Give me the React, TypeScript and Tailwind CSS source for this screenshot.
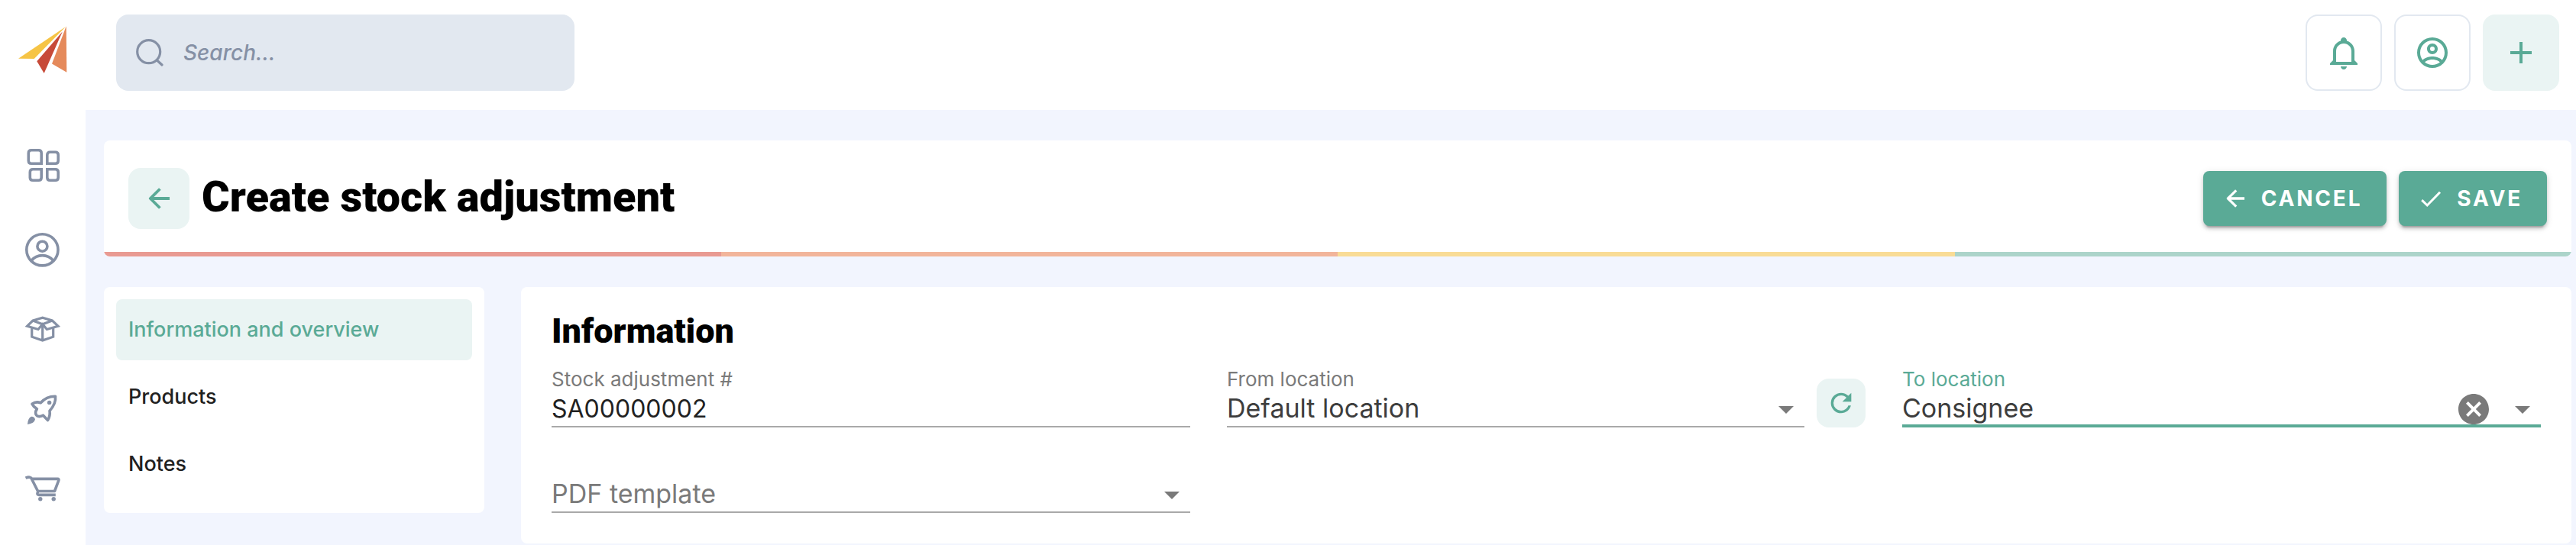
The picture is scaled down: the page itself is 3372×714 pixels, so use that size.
import type { ReactNode } from 'react';

const MDI = {
  bell: 'M10 21H14C14 22.1 13.1 23 12 23S10 22.1 10 21M21 19V20H3V19L5 17V11C5 7.9 7 5.2 10 4.3V4C10 2.9 10.9 2 12 2S14 2.9 14 4V4.3C17 5.2 19 7.9 19 11V17L21 19M17 11C17 8.2 14.8 6 12 6S7 8.2 7 11V18H17V11Z',
  account:
    'M12,2A10,10 0 0,0 2,12A10,10 0 0,0 12,22A10,10 0 0,0 22,12A10,10 0 0,0 12,2M7.07,18.28C7.5,17.38 10.12,16.5 12,16.5C13.88,16.5 16.5,17.38 16.93,18.28C15.57,19.36 13.86,20 12,20C10.14,20 8.43,19.36 7.07,18.28M18.36,16.83C16.93,15.09 13.46,14.5 12,14.5C10.54,14.5 7.07,15.09 5.64,16.83C4.62,15.5 4,13.82 4,12C4,7.59 7.59,4 12,4C16.41,4 20,7.59 20,12C20,13.82 19.38,15.5 18.36,16.83M12,6C10.06,6 8.5,7.56 8.5,9.5C8.5,11.44 10.06,13 12,13C13.94,13 15.5,11.44 15.5,9.5C15.5,7.56 13.94,6 12,6M12,11A1.5,1.5 0 0,1 10.5,9.5A1.5,1.5 0 0,1 12,8A1.5,1.5 0 0,1 13.5,9.5A1.5,1.5 0 0,1 12,11Z',
  plus: 'M19,13H13V19H11V13H5V11H11V5H13V11H19V13Z',
  refresh:
    'M17.65,6.35C16.2,4.9 14.21,4 12,4A8,8 0 0,0 4,12A8,8 0 0,0 12,20C15.73,20 18.84,17.45 19.73,14H17.65C16.83,16.33 14.61,18 12,18A6,6 0 0,1 6,12A6,6 0 0,1 12,6C13.66,6 15.14,6.69 16.22,7.78L13,11H20V4L17.65,6.35Z',
  closeCircle:
    'M12,2C17.53,2 22,6.47 22,12C22,17.53 17.53,22 12,22C6.47,22 2,17.53 2,12C2,6.47 6.47,2 12,2M15.59,7L12,10.59L8.41,7L7,8.41L10.59,12L7,15.59L8.41,17L12,13.41L15.59,17L17,15.59L13.41,12L17,8.41L15.59,7Z',
  menuDown: 'M7,10L12,15L17,10H7Z',
};

function Icon({ path, className = 'size-12' }: { path: string; className?: string }) {
  return (
    <svg viewBox="0 0 24 24" fill="currentColor" aria-hidden="true" className={`shrink-0 ${className}`}>
      <path d={path} />
    </svg>
  );
}

function ArrowLeft({ className }: { className: string }) {
  return (
    <svg viewBox="0 0 28 28" fill="none" stroke="currentColor" strokeWidth="3.8" strokeLinejoin="round" aria-hidden="true" className={`shrink-0 ${className}`}>
      <path d="M15.4 1.5L2.8 14L15.4 26.5M3 14H28" />
    </svg>
  );
}

function NavItem({ label, children }: { label: string; children: ReactNode }) {
  return (
    <a href="#" aria-label={label} className="flex h-26 items-center justify-center">
      <svg viewBox="0 0 56 56" fill="none" stroke="currentColor" strokeWidth="3.6" className="size-14">
        {children}
      </svg>
    </a>
  );
}

function Sidebar() {
  return (
    <aside className="flex w-28 shrink-0 flex-col bg-white text-[#8590a5]">
      <a href="#" aria-label="Home" className="block h-36 pt-[34px] pl-6">
        <svg viewBox="0 0 64 64" className="size-16">
          <path fill="#f6c445" d="M0 42.8L62 1L20.7 43Z" />
          <path fill="#c74a38" d="M57.7 7.5L24.3 46.3L33.7 62Z" />
          <path fill="#e58a5b" d="M62.7 0.3L63.3 60.7L44 49.5Z" />
        </svg>
      </a>
      <nav className="flex flex-col pt-[27px]">
        <NavItem label="Dashboard">
          <path d="M26.2 19.2V5.5Q26.2 1.8 22.5 1.8H13Q9.3 1.8 9.3 5.5V15.5Q9.3 19.2 13 19.2Z" />
          <path d="M33.8 19.2V8Q33.8 4.3 37.5 4.3H44.5Q48.2 4.3 48.2 8V15.5Q48.2 19.2 44.5 19.2Z" />
          <path d="M26.2 26.8V37.5Q26.2 41.2 22.5 41.2H15Q11.3 41.2 11.3 37.5V30.5Q11.3 26.8 15 26.8Z" />
          <path d="M33.8 26.8V37.5Q33.8 41.2 37.5 41.2H44.5Q48.2 41.2 48.2 37.5V30.5Q48.2 26.8 44.5 26.8Z" />
        </NavItem>
        <NavItem label="Contacts">
          <circle cx="27.4" cy="28.3" r="20.6" />
          <circle cx="27.4" cy="23.7" r="6.5" />
          <path d="M13 42.5A18.5 18.5 0 0 1 41.8 42.5" />
        </NavItem>
        <NavItem label="Stock">
          <g strokeWidth="3.2">
            <path d="M15 17L27.7 13.2L40.4 17L48 24.2L33.4 28.5L27.7 21.8L22 28.5L7.6 24.2Z" />
            <path d="M15 17L27.7 21.8L40.4 17" />
            <path d="M13.7 26V38.2L27.7 43L41.7 38.2V26M27.7 22V43" />
          </g>
        </NavItem>
        <NavItem label="Launch">
          <path
            strokeLinejoin="round"
            d="M44.5 12.3Q33 12 25.2 20.8Q19 18.5 14 22.2Q15.5 25.5 20.4 28.8Q17.8 32 19 36Q21.5 40.5 28.5 37.2L34.5 43.5Q38 38 37 31.2Q45.5 22 44.5 12.3Z"
          />
          <circle cx="36.6" cy="20.4" r="2.7" fill="currentColor" stroke="none" />
          <path stroke="none" fill="currentColor" d="M8 49Q8.5 40.5 13 38.8Q17 38.5 18 42.5Q17 47.5 8 49Z" />
        </NavItem>
        <NavItem label="Orders">
          <path d="M5.5 15.2Q12 12.5 13.5 16.5L21.8 33Q19.5 37.4 23 37.4H44.8" />
          <path strokeLinejoin="round" d="M14 16.4H47.5Q49.5 16.4 48.8 18.4L43.5 32.5H22" />
          <circle cx="24.8" cy="42.8" r="2.7" fill="currentColor" stroke="none" />
          <circle cx="42.2" cy="42.8" r="2.7" fill="currentColor" stroke="none" />
        </NavItem>
      </nav>
    </aside>
  );
}

function TopBar() {
  return (
    <header className="flex h-36 items-center justify-between bg-white pr-[22px] pb-1.5 pl-10">
      <label className="flex h-25 w-150 items-center gap-[26px] rounded-2xl bg-[#e2e8f0] pl-[26px] text-[#8590a5]">
        <svg viewBox="0 0 36 36" fill="none" stroke="currentColor" strokeWidth="3.2" aria-hidden="true" className="size-9 shrink-0">
          <circle cx="16.7" cy="16.7" r="15" />
          <path strokeLinecap="round" d="M27.5 28L34 34" />
        </svg>
        <input
          type="search"
          aria-label="Search"
          placeholder="Search..."
          className="min-w-0 flex-1 bg-transparent text-[28px] font-medium italic outline-none placeholder:text-[#8590a5]"
        />
      </label>
      <div className="flex gap-4 text-[#5aaa96]">
        <button type="button" aria-label="Notifications" className="flex size-25 items-center justify-center rounded-2xl border-2 border-[#e2e8f0]">
          <Icon path={MDI.bell} />
        </button>
        <button type="button" aria-label="Account" className="flex size-25 items-center justify-center rounded-2xl border-2 border-[#e2e8f0]">
          <Icon path={MDI.account} />
        </button>
        <button type="button" aria-label="Add" className="flex size-25 items-center justify-center rounded-2xl bg-[#eaf4f3]">
          <Icon path={MDI.plus} />
        </button>
      </div>
    </header>
  );
}

const ACTION =
  'flex h-18 items-center gap-4 rounded-lg bg-[#5aaa96] pr-8 pl-6 text-[28px] font-bold tracking-widest text-white uppercase shadow-[0_6px_2px_-4px_rgba(0,0,0,0.2),0_4px_4px_0_rgba(0,0,0,0.14),0_2px_10px_0_rgba(0,0,0,0.12)]';

function TitleCard() {
  return (
    <section className="overflow-hidden rounded-lg bg-white">
      <div className="flex h-[146px] items-center justify-between px-8 pt-1.5">
        <div className="flex items-center gap-4">
          <button type="button" aria-label="Back" className="flex size-20 items-center justify-center rounded-2xl bg-[#eaf4f3] text-[#5aaa96]">
            <ArrowLeft className="size-7" />
          </button>
          <h1 className="pb-1 font-['Roboto',sans-serif] text-[56px] leading-16 font-black text-black">Create stock adjustment</h1>
        </div>
        <div className="flex gap-4">
          <button type="button" className={ACTION}>
            <span className="flex size-9 items-center justify-center">
              <ArrowLeft className="size-6" />
            </span>
            Cancel
          </button>
          <button type="button" className={ACTION}>
            <svg viewBox="0 0 36 36" fill="none" stroke="currentColor" strokeWidth="3" aria-hidden="true" className="size-9">
              <path d="M6.2 20.2L13.2 27L30 9.8" />
            </svg>
            Save
          </button>
        </div>
      </div>
      <div className="grid h-1.5 grid-cols-4">
        <div className="bg-[#e99a92]" />
        <div className="bg-[#f2b59b]" />
        <div className="bg-[#f9dc96]" />
        <div className="bg-[#acd4ca]" />
      </div>
    </section>
  );
}

function SectionMenu() {
  return (
    <nav className="flex w-[498px] shrink-0 flex-col gap-2 self-start rounded-lg bg-white p-4 pb-6 text-[27px] font-medium text-[#212121]">
      <a href="#information" aria-current="page" className="flex h-20 items-center rounded-lg bg-[#eaf4f3] px-4 text-[#5aaa96]">
        Information and overview
      </a>
      <a href="#products" className="flex h-20 items-center rounded-lg px-4">
        Products
      </a>
      <a href="#notes" className="flex h-20 items-center rounded-lg px-4">
        Notes
      </a>
    </nav>
  );
}

const LABEL = 'block pt-2.5 text-[26px] leading-[30px]';
const CONTROL = 'flex h-12 items-center';
const LINE = 'shadow-[inset_0_-2px_0_#a9a9a9]';
const SELECT = 'h-12 min-w-0 flex-1 appearance-none bg-transparent pb-0.5 text-[34px] leading-11 outline-none';

function InformationCard() {
  return (
    <section id="information" className="min-w-0 flex-1 rounded-lg bg-white px-10 pt-7 pb-10">
      <h2 className="mb-2 font-['Roboto',sans-serif] text-[45px] leading-15 font-black text-black">Information</h2>
      <form className="grid grid-cols-3 gap-x-12 gap-y-6">
        <div>
          <label htmlFor="number" className={`${LABEL} text-[#7a7a7a]`}>
            Stock adjustment #
          </label>
          <div className={`${CONTROL} ${LINE} text-[#212121]`}>
            <input id="number" defaultValue="SA00000002" className="h-12 min-w-0 flex-1 bg-transparent text-[32px] outline-none" />
          </div>
        </div>
        <div className="flex items-end gap-4">
          <div className="min-w-0 flex-1">
            <label htmlFor="from" className={`${LABEL} text-[#7a7a7a]`}>
              From location
            </label>
            <div className={`${CONTROL} ${LINE} text-[#3d3d3d]`}>
              <select id="from" className={SELECT}>
                <option>Default location</option>
              </select>
              <Icon path={MDI.menuDown} className="size-12 text-[#7a7a7a]" />
            </div>
          </div>
          <button type="button" aria-label="Reload locations" className="flex size-16 items-center justify-center rounded-2xl bg-[#eaf4f3] text-[#5aaa96]">
            <Icon path={MDI.refresh} className="size-10" />
          </button>
        </div>
        <div>
          <label htmlFor="to" className={`${LABEL} text-[#5aaa96]`}>
            To location
          </label>
          <div className={`${CONTROL} text-[#3d3d3d] shadow-[inset_0_-4px_0_#5aaa96]`}>
            <select id="to" className={SELECT}>
              <option>Consignee</option>
            </select>
            <button type="button" aria-label="Clear" className="mr-4 text-[#7a7a7a]">
              <Icon path={MDI.closeCircle} />
            </button>
            <Icon path={MDI.menuDown} className="size-12 text-[#7a7a7a]" />
          </div>
        </div>
        <div className="pt-10">
          <div className={`${CONTROL} ${LINE} text-[#7a7a7a]`}>
            <select aria-label="PDF template" className={SELECT}>
              <option>PDF template</option>
            </select>
            <Icon path={MDI.menuDown} />
          </div>
        </div>
      </form>
    </section>
  );
}

export default function App() {
  return (
    <div className="flex min-h-screen bg-[#f2f5fe] font-['Inter',sans-serif]">
      <Sidebar />
      <div className="flex min-w-0 flex-1 flex-col">
        <TopBar />
        <main className="flex flex-col gap-10 pt-10 pr-1.5 pl-6">
          <TitleCard />
          <div className="flex gap-12">
            <SectionMenu />
            <InformationCard />
          </div>
        </main>
      </div>
    </div>
  );
}
